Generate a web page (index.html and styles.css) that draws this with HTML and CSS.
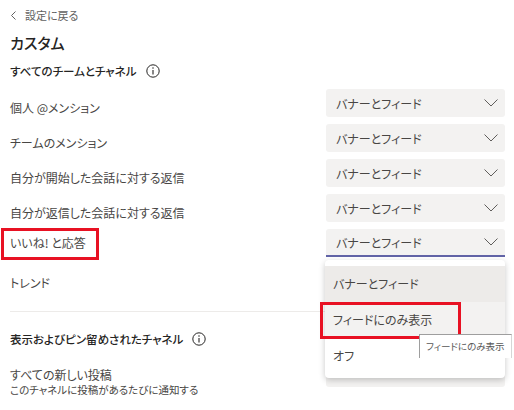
FILE: index.html
```html
<!DOCTYPE html>
<html lang="ja">
<head>
    <meta charset="UTF-8">
    <title>カスタム</title>
    <link rel="stylesheet" href="styles.css">
</head>
<body>
<div class="page">
    <!-- back link -->
    <div class="back">
        <svg width="7" height="9" viewBox="0 0 7 9"><polyline points="5.5,0.5 1.5,4.5 5.5,8.5" fill="none" stroke="#616161" stroke-width="1"/></svg>
        <span>設定に戻る</span>
    </div>
    <h1 class="title">カスタム</h1>

    <div class="section-head">
        <span>すべてのチームとチャネル</span>
        <svg class="info" width="14" height="14" viewBox="0 0 14 14"><circle cx="7" cy="7" r="6.2" fill="none" stroke="#252423" stroke-width="1"/><line x1="7" y1="6" x2="7" y2="10.5" stroke="#252423" stroke-width="1.1"/><circle cx="7" cy="4" r="0.75" fill="#252423"/></svg>
    </div>

    <div class="rows">
        <div class="row">
            <span class="label low">個人 @メンション</span>
            <div class="select"><span>バナーとフィード</span><svg width="14" height="8" viewBox="0 0 14 8"><polyline points="0.5,0.5 7,7 13.5,0.5" fill="none" stroke="#605e5c" stroke-width="1"/></svg></div>
        </div>
        <div class="row">
            <span class="label low">チームのメンション</span>
            <div class="select"><span>バナーとフィード</span><svg width="14" height="8" viewBox="0 0 14 8"><polyline points="0.5,0.5 7,7 13.5,0.5" fill="none" stroke="#605e5c" stroke-width="1"/></svg></div>
        </div>
        <div class="row">
            <span class="label low">自分が開始した会話に対する返信</span>
            <div class="select"><span>バナーとフィード</span><svg width="14" height="8" viewBox="0 0 14 8"><polyline points="0.5,0.5 7,7 13.5,0.5" fill="none" stroke="#605e5c" stroke-width="1"/></svg></div>
        </div>
        <div class="row">
            <span class="label low">自分が返信した会話に対する返信</span>
            <div class="select"><span>バナーとフィード</span><svg width="14" height="8" viewBox="0 0 14 8"><polyline points="0.5,0.5 7,7 13.5,0.5" fill="none" stroke="#605e5c" stroke-width="1"/></svg></div>
        </div>
        <div class="row">
            <span class="label">いいね! と応答</span>
            <div class="select open"><span>バナーとフィード</span><svg width="14" height="8" viewBox="0 0 14 8"><polyline points="0.5,0.5 7,7 13.5,0.5" fill="none" stroke="#605e5c" stroke-width="1"/></svg>
                <div class="menu">
                    <div class="item current">バナーとフィード</div>
                    <div class="item hover">フィードにのみ表示</div>
                    <div class="item">オフ</div>
                </div>
            </div>
            <div class="mark mark-label"></div>
        </div>
        <div class="row">
            <span class="label low">トレンド</span>
            <div class="select"></div>
        </div>
    </div>

    <div class="divider"></div>

    <div class="section-head second">
        <span>表示およびピン留めされたチャネル</span>
        <svg class="info" width="14" height="14" viewBox="0 0 14 14"><circle cx="7" cy="7" r="6.2" fill="none" stroke="#252423" stroke-width="1"/><line x1="7" y1="6" x2="7" y2="10.5" stroke="#252423" stroke-width="1.1"/><circle cx="7" cy="4" r="0.75" fill="#252423"/></svg>
    </div>

    <div class="row two-line">
        <div class="label-block">
            <div class="label">すべての新しい投稿</div>
            <div class="sub">このチャネルに投稿があるたびに通知する</div>
        </div>
        <div class="select"></div>
    </div>

    <div class="mark mark-item"></div>
    <div class="tooltip">フィードにのみ表示</div>
</div>
</body>
</html>
```

FILE: styles.css
```css
body {
    margin: 0;
    background: #fff;
    font-family: "Noto Sans CJK JP", "Noto Sans", sans-serif;
    font-feature-settings: "palt";
    color: #484644;
}
.page {
    position: relative;
    width: 514px;
    height: 410px;
    box-sizing: border-box;
    padding: 8px 9px 0 10px;
    overflow: hidden;
}
.back {
    display: flex;
    align-items: center;
    gap: 8px;
    height: 14px;
    font-size: 11px;
    line-height: 14px;
    color: #616161;
}
.title {
    margin: 10px 0 0;
    font-size: 15px;
    line-height: 22px;
    font-weight: 500;
    color: #252423;
}
.section-head {
    display: flex;
    align-items: center;
    gap: 9px;
    margin-top: 8px;
    height: 18px;
    font-size: 11.5px;
    font-weight: 500;
    color: #252423;
}
.section-head.second {
    margin-top: 17px;
    height: 20px;
}
.rows {
    display: flex;
    flex-direction: column;
    gap: 7px;
    margin-top: 9px;
}
.row {
    position: relative;
    display: flex;
    justify-content: space-between;
    align-items: center;
    height: 28px;
}
.label {
    font-size: 12px;
    line-height: 16px;
    color: #484644;
}
.label.low {
    padding-top: 10px;
}
.select {
    position: relative;
    display: flex;
    align-items: center;
    justify-content: space-between;
    box-sizing: border-box;
    width: 179px;
    height: 28px;
    padding: 0 7px 0 10px;
    background: #f3f2f1;
    border-radius: 3px;
    font-size: 12px;
    color: #484644;
}
.select.open {
    border-bottom: 2px solid #6264a7;
    border-radius: 3px 3px 0 0;
}
.menu {
    position: absolute;
    z-index: 2;
    left: -1px;
    top: 31px;
    width: 180px;
    box-sizing: border-box;
    padding: 6px 0 4px;
    background: #fff;
    border-radius: 4px;
    box-shadow: 0 2px 6px rgba(0, 0, 0, 0.22);
}
.item {
    height: 36px;
    line-height: 36px;
    padding-left: 8px;
    font-size: 12px;
    color: #484644;
}
.item.current {
    background: #edebe9;
}
.item.hover {
    background: #f3f2f1;
}
.divider {
    height: 1px;
    margin-top: 19px;
    background: #edebe9;
}
.two-line {
    align-items: flex-start;
    margin-top: 10px;
}
.label-block {
    padding-top: 8px;
}
.sub {
    font-size: 10.5px;
    line-height: 14px;
    color: #484644;
}
.mark {
    position: absolute;
    z-index: 3;
    border: 3px solid #e81123;
    box-sizing: border-box;
}
.mark-label {
    left: -9px;
    top: -1px;
    width: 98px;
    height: 32px;
}
.mark-item {
    left: 320px;
    top: 302px;
    width: 141px;
    height: 37px;
}
.tooltip {
    position: absolute;
    z-index: 4;
    left: 419px;
    top: 334px;
    width: 93px;
    height: 24px;
    box-sizing: border-box;
    padding-left: 6px;
    background: #fff;
    border: 1px solid #9e9e9e;
    border-right-color: #d6d6d6;
    border-bottom: none;
    font-size: 9.5px;
    line-height: 22px;
    color: #575757;
    white-space: nowrap;
}
```
